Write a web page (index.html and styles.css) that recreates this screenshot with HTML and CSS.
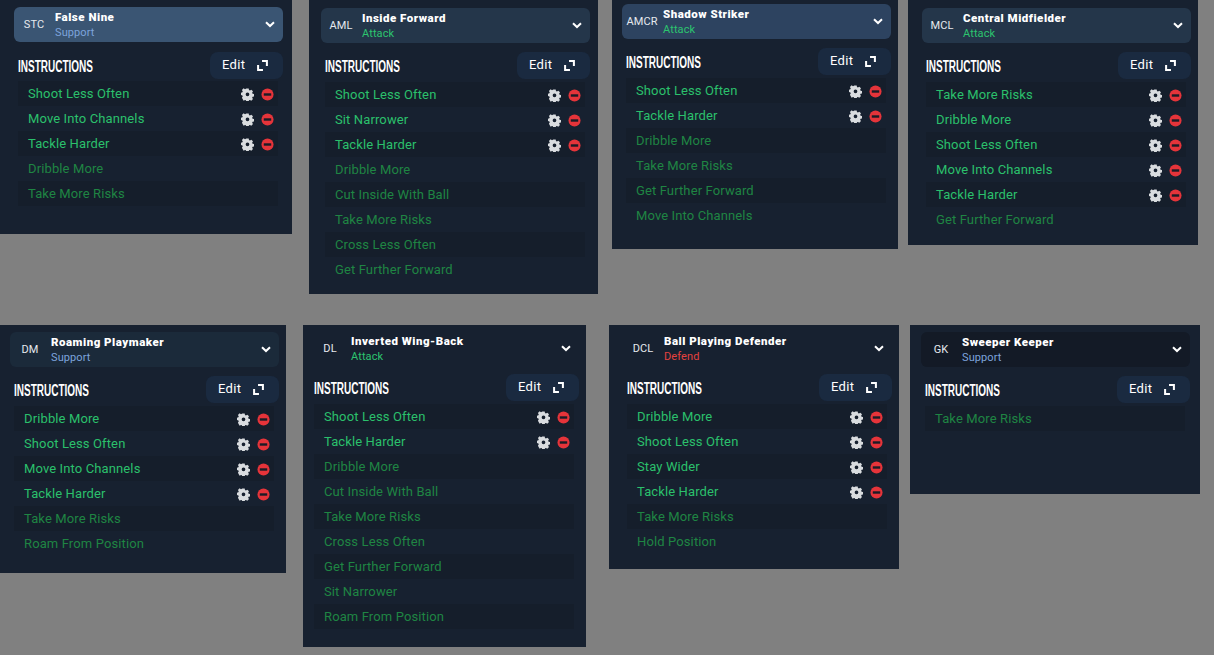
FILE: index.html
```html
<!DOCTYPE html>
<html lang="en">
<head>
    <meta charset="UTF-8">
    <title>Player Roles</title>
    <link rel="stylesheet" href="styles.css">
</head>
<body>

    <svg class="sprites" width="0" height="0">
        <symbol id="gear" viewBox="0 0 14 14">
            <path fill-rule="evenodd" d="M5.7.5h2.6l.3 1.7 1 .5 1.5-.9 1.8 1.8-.9 1.5.5 1 1.7.3v2.6l-1.7.4-.5 1 .9 1.5-1.8 1.8-1.5-.9-1 .4-.3 1.8H5.7l-.4-1.8-1-.4-1.5.9L1 10.5l.9-1.5-.4-1L0 7.6V5l1.5-.3.4-1L1 2.2 2.8.4l1.5.9 1-.5zM7 4.8a2 2 0 1 0 0 4 2 2 0 0 0 0-4z"/>
        </symbol>
        <symbol id="remove" viewBox="0 0 14 14">
            <circle cx="7" cy="7" r="6.5" fill="#e5343a"/>
            <rect x="3" y="5.7" width="8" height="2.6" fill="#1b1c26"/>
        </symbol>
        <symbol id="expand" viewBox="0 0 12 12">
            <path d="M5.5 1.2h5.3v5.3M1.2 5.5v5.3h5.3" fill="none" stroke="#fff" stroke-width="2.2"/>
        </symbol>
        <symbol id="chevron" viewBox="0 0 10 7">
            <path d="M1 1.2l4 3.8 4-3.8" fill="none" stroke="#fff" stroke-width="2"/>
        </symbol>
    </svg>

    <!-- top row -->
    <section class="panel panel-stc">
        <div class="role role-hover">
            <span class="pos">STC</span>
            <div class="role-text"><b>False Nine</b><span class="duty support">Support</span></div>
            <svg class="chevron"><use href="#chevron"/></svg>
        </div>
        <div class="head"><h3>INSTRUCTIONS</h3><button class="edit">Edit <svg><use href="#expand"/></svg></button></div>
        <ul class="list">
            <li class="on">Shoot Less Often<svg class="gear"><use href="#gear"/></svg><svg class="minus"><use href="#remove"/></svg></li>
            <li class="on">Move Into Channels<svg class="gear"><use href="#gear"/></svg><svg class="minus"><use href="#remove"/></svg></li>
            <li class="on">Tackle Harder<svg class="gear"><use href="#gear"/></svg><svg class="minus"><use href="#remove"/></svg></li>
            <li>Dribble More</li>
            <li>Take More Risks</li>
        </ul>
    </section>

    <section class="panel panel-aml">
        <div class="role role-mid">
            <span class="pos">AML</span>
            <div class="role-text"><b>Inside Forward</b><span class="duty attack">Attack</span></div>
            <svg class="chevron"><use href="#chevron"/></svg>
        </div>
        <div class="head"><h3>INSTRUCTIONS</h3><button class="edit">Edit <svg><use href="#expand"/></svg></button></div>
        <ul class="list">
            <li class="on">Shoot Less Often<svg class="gear"><use href="#gear"/></svg><svg class="minus"><use href="#remove"/></svg></li>
            <li class="on">Sit Narrower<svg class="gear"><use href="#gear"/></svg><svg class="minus"><use href="#remove"/></svg></li>
            <li class="on">Tackle Harder<svg class="gear"><use href="#gear"/></svg><svg class="minus"><use href="#remove"/></svg></li>
            <li>Dribble More</li>
            <li>Cut Inside With Ball</li>
            <li>Take More Risks</li>
            <li>Cross Less Often</li>
            <li>Get Further Forward</li>
        </ul>
    </section>

    <section class="panel panel-amcr">
        <div class="role role-light">
            <span class="pos">AMCR</span>
            <div class="role-text"><b>Shadow Striker</b><span class="duty attack">Attack</span></div>
            <svg class="chevron"><use href="#chevron"/></svg>
        </div>
        <div class="head"><h3>INSTRUCTIONS</h3><button class="edit">Edit <svg><use href="#expand"/></svg></button></div>
        <ul class="list">
            <li class="on">Shoot Less Often<svg class="gear"><use href="#gear"/></svg><svg class="minus"><use href="#remove"/></svg></li>
            <li class="on">Tackle Harder<svg class="gear"><use href="#gear"/></svg><svg class="minus"><use href="#remove"/></svg></li>
            <li>Dribble More</li>
            <li>Take More Risks</li>
            <li>Get Further Forward</li>
            <li>Move Into Channels</li>
        </ul>
    </section>

    <section class="panel panel-mcl">
        <div class="role role-mid">
            <span class="pos">MCL</span>
            <div class="role-text"><b>Central Midfielder</b><span class="duty attack">Attack</span></div>
            <svg class="chevron"><use href="#chevron"/></svg>
        </div>
        <div class="head"><h3>INSTRUCTIONS</h3><button class="edit">Edit <svg><use href="#expand"/></svg></button></div>
        <ul class="list">
            <li class="on">Take More Risks<svg class="gear"><use href="#gear"/></svg><svg class="minus"><use href="#remove"/></svg></li>
            <li class="on">Dribble More<svg class="gear"><use href="#gear"/></svg><svg class="minus"><use href="#remove"/></svg></li>
            <li class="on">Shoot Less Often<svg class="gear"><use href="#gear"/></svg><svg class="minus"><use href="#remove"/></svg></li>
            <li class="on">Move Into Channels<svg class="gear"><use href="#gear"/></svg><svg class="minus"><use href="#remove"/></svg></li>
            <li class="on">Tackle Harder<svg class="gear"><use href="#gear"/></svg><svg class="minus"><use href="#remove"/></svg></li>
            <li>Get Further Forward</li>
        </ul>
    </section>

    <!-- bottom row -->
    <section class="panel panel-dm">
        <div class="role role-soft">
            <span class="pos">DM</span>
            <div class="role-text"><b>Roaming Playmaker</b><span class="duty support">Support</span></div>
            <svg class="chevron"><use href="#chevron"/></svg>
        </div>
        <div class="head"><h3>INSTRUCTIONS</h3><button class="edit">Edit <svg><use href="#expand"/></svg></button></div>
        <ul class="list">
            <li class="on">Dribble More<svg class="gear"><use href="#gear"/></svg><svg class="minus"><use href="#remove"/></svg></li>
            <li class="on">Shoot Less Often<svg class="gear"><use href="#gear"/></svg><svg class="minus"><use href="#remove"/></svg></li>
            <li class="on">Move Into Channels<svg class="gear"><use href="#gear"/></svg><svg class="minus"><use href="#remove"/></svg></li>
            <li class="on">Tackle Harder<svg class="gear"><use href="#gear"/></svg><svg class="minus"><use href="#remove"/></svg></li>
            <li>Take More Risks</li>
            <li>Roam From Position</li>
        </ul>
    </section>

    <section class="panel panel-dl">
        <div class="role">
            <span class="pos">DL</span>
            <div class="role-text"><b>Inverted Wing-Back</b><span class="duty attack">Attack</span></div>
            <svg class="chevron"><use href="#chevron"/></svg>
        </div>
        <div class="head"><h3>INSTRUCTIONS</h3><button class="edit">Edit <svg><use href="#expand"/></svg></button></div>
        <ul class="list">
            <li class="on">Shoot Less Often<svg class="gear"><use href="#gear"/></svg><svg class="minus"><use href="#remove"/></svg></li>
            <li class="on">Tackle Harder<svg class="gear"><use href="#gear"/></svg><svg class="minus"><use href="#remove"/></svg></li>
            <li>Dribble More</li>
            <li>Cut Inside With Ball</li>
            <li>Take More Risks</li>
            <li>Cross Less Often</li>
            <li>Get Further Forward</li>
            <li>Sit Narrower</li>
            <li>Roam From Position</li>
        </ul>
    </section>

    <section class="panel panel-dcl">
        <div class="role">
            <span class="pos">DCL</span>
            <div class="role-text"><b>Ball Playing Defender</b><span class="duty defend">Defend</span></div>
            <svg class="chevron"><use href="#chevron"/></svg>
        </div>
        <div class="head"><h3>INSTRUCTIONS</h3><button class="edit">Edit <svg><use href="#expand"/></svg></button></div>
        <ul class="list">
            <li class="on">Dribble More<svg class="gear"><use href="#gear"/></svg><svg class="minus"><use href="#remove"/></svg></li>
            <li class="on">Shoot Less Often<svg class="gear"><use href="#gear"/></svg><svg class="minus"><use href="#remove"/></svg></li>
            <li class="on">Stay Wider<svg class="gear"><use href="#gear"/></svg><svg class="minus"><use href="#remove"/></svg></li>
            <li class="on">Tackle Harder<svg class="gear"><use href="#gear"/></svg><svg class="minus"><use href="#remove"/></svg></li>
            <li>Take More Risks</li>
            <li>Hold Position</li>
        </ul>
    </section>

    <section class="panel panel-gk">
        <div class="role role-dark">
            <span class="pos">GK</span>
            <div class="role-text"><b>Sweeper Keeper</b><span class="duty support">Support</span></div>
            <svg class="chevron"><use href="#chevron"/></svg>
        </div>
        <div class="head"><h3>INSTRUCTIONS</h3><button class="edit">Edit <svg><use href="#expand"/></svg></button></div>
        <ul class="list">
            <li>Take More Risks</li>
        </ul>
    </section>

</body>
</html>
```

FILE: styles.css
```css
body {
    margin: 0;
    width: 1214px;
    height: 655px;
    overflow: hidden;
    position: relative;
    background-color: #808080;
    font-family: Roboto, Arial, sans-serif;
}
.sprites {
    position: absolute;
}

/* panels are screenshots pasted on a canvas, so each has its own place */
.panel {
    position: absolute;
    box-sizing: border-box;
    background-color: #172130;
}
.panel-stc { left: 0; top: 0; width: 292px; height: 234px; padding: 7px 0 0 14px; }
.panel-aml { left: 309px; top: 0; width: 289px; height: 294px; padding: 8px 0 0 12px; }
.panel-amcr { left: 612px; top: 0; width: 286px; height: 249px; padding: 4px 0 0 10px; }
.panel-mcl { left: 908px; top: 0; width: 290px; height: 245px; padding: 8px 0 0 14px; }
.panel-dm { left: 0; top: 325px; width: 286px; height: 248px; padding: 7px 0 0 10px; }
.panel-dl { left: 303px; top: 325px; width: 283px; height: 322px; padding: 6px 0 0 7px; }
.panel-dcl { left: 609px; top: 325px; width: 290px; height: 244px; padding: 6px 0 0 14px; }
.panel-gk { left: 910px; top: 325px; width: 290px; height: 169px; padding: 7px 0 0 11px; }

.role {
    display: flex;
    align-items: center;
    width: 269px;
    height: 35px;
    border-radius: 6px;
    margin-bottom: 9px;
    color: white;
}
.panel-stc .role { margin-bottom: 10px; }
.panel-dl .role, .panel-dcl .role { margin-bottom: 8px; }
.role-hover { background-color: #3a5573; }
.role-mid { background-color: #24364a; }
.role-light { background-color: #2d4360; }
.role-soft { background-color: #1b2a3a; }
.role-dark { background-color: #131a26; }

.pos {
    width: 40px;
    margin-right: 1px;
    text-align: center;
    font-size: 11px;
    letter-spacing: 0.1px;
    color: #e6e9ee;
}
.role-text {
    flex: 1;
    display: flex;
    flex-direction: column;
}
.role-text b {
    font-size: 11.5px;
    line-height: 15px;
    letter-spacing: 0.5px;
    font-weight: 900;
}
.duty {
    font-size: 11px;
    line-height: 15px;
    letter-spacing: 0.1px;
}
.support { color: #7da4dc; }
.attack { color: #2cc56f; }
.defend { color: #e5423f; }
.chevron {
    width: 10px;
    height: 7px;
    margin-right: 8px;
}

.head {
    display: flex;
    align-items: center;
    justify-content: space-between;
    width: 269px;
    height: 27px;
}
.head h3 {
    margin: 2px 0 0 4px;
    font-family: "Liberation Sans", sans-serif;
    font-size: 16px;
    font-weight: 700;
    color: white;
    transform: scaleX(0.625);
    transform-origin: left center;
}
.edit {
    display: flex;
    align-items: center;
    justify-content: space-between;
    box-sizing: border-box;
    width: 73px;
    height: 27px;
    padding: 0 15px 3px 12px;
    border: none;
    border-radius: 8px;
    background-color: #1a2a40;
    color: white;
    font-family: Roboto, Arial, sans-serif;
    font-size: 13px;
    letter-spacing: 0.3px;
}
.edit svg {
    width: 11px;
    height: 11px;
    margin-top: 3px;
}

.list {
    list-style: none;
    margin: 3px 0 0 4px;
    padding: 0;
    width: 260px;
}
.panel-stc .list { margin-top: 2px; }
.list li {
    display: flex;
    align-items: center;
    box-sizing: border-box;
    height: 25px;
    padding-left: 10px;
    font-size: 13px;
    letter-spacing: 0.12px;
    color: #1f8543;
}
.list li:nth-child(odd) {
    background-color: #151e2b;
}
.list li.on {
    color: #2bc06c;
}
.gear {
    width: 13px;
    height: 13px;
    margin: 2px 0 0 auto;
    fill: #d9dcdf;
}
.minus {
    width: 13px;
    height: 13px;
    margin: 2px 4px 0 7px;
}
```
